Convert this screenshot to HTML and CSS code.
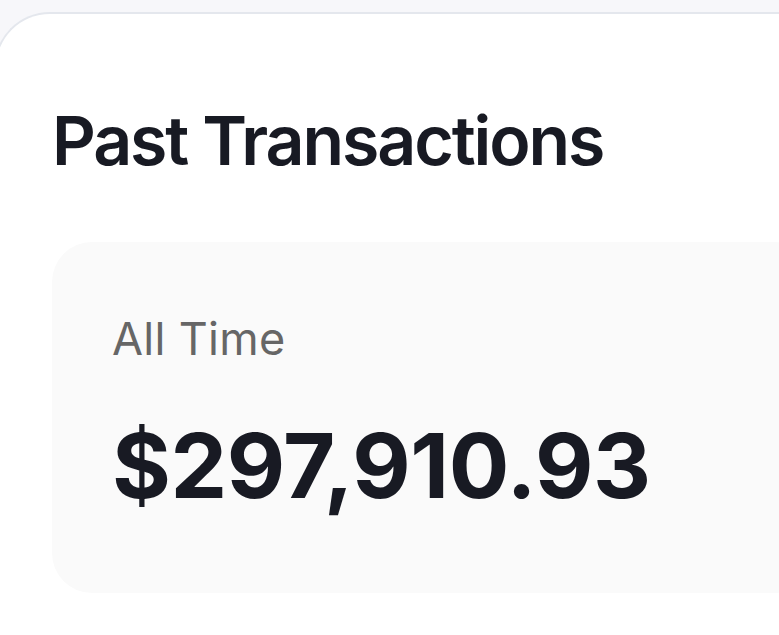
FILE: index.html
```html
<!DOCTYPE html>
<html>
<head>
<meta charset="utf-8">
<link rel="stylesheet" href="styles.css">
</head>
<body>
<div class="page">
  <div class="card">
    <h1 class="title">Past Transactions</h1>
    <div class="stat">
      <div class="stat-label">All Time</div>
      <div class="stat-value">$297,910.93</div>
    </div>
  </div>
</div>
</body>
</html>
```

FILE: styles.css
```css
html, body {
  margin: 0;
  padding: 0;
  background: #f7f7fa;
  font-family: Inter, "Noto Sans", sans-serif;
  overflow: hidden;
}
.page {
  width: 779px;
  height: 635px;
  padding-top: 12px;
  box-sizing: border-box;
  overflow: hidden;
}
.card {
  margin-left: -6px;
  width: 820px;
  height: 623px;
  background: #ffffff;
  border-top: 2px solid #e4e7ed;
  border-left: 2px solid #e4e7ed;
  border-top-left-radius: 56px;
  box-sizing: border-box;
  padding: 92px 0 0 56px;
}
.title {
  margin: 0;
  font-size: 68px;
  font-weight: 600;
  letter-spacing: -2.1px;
  color: #181a23;
  line-height: 1;
}
.stat {
  margin-top: 68px;
  background: #fafafa;
  border-radius: 40px;
  height: 351px;
  box-sizing: border-box;
  padding: 74px 0 0 60px;
}
.stat-label {
  font-size: 45px;
  font-weight: 400;
  color: #666666;
  letter-spacing: 0.3px;
  line-height: 1;
}
.stat-value {
  margin-top: 60px;
  font-size: 90px;
  font-weight: 700;
  color: #181a23;
  letter-spacing: -0.4px;
  line-height: 1;
}
```
